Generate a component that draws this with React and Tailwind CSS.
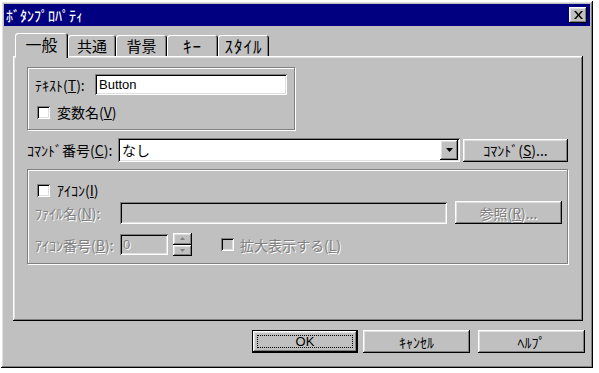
import React from 'react';

const raised = 'shadow-[inset_-1px_-1px_0_#000,inset_1px_1px_0_#fff,inset_-2px_-2px_0_#808080,inset_2px_2px_0_#dfdfdf]';
const sunken = 'shadow-[inset_1px_1px_0_#808080,inset_-1px_-1px_0_#fff,inset_2px_2px_0_#000,inset_-2px_-2px_0_#dfdfdf]';
const dis = 'text-[#808080] [text-shadow:1px_1px_0_#fff]';

function Checkbox({ disabled }) {
  return (
    <div className={`w-[13px] h-[13px] shrink-0 ${sunken} ${disabled ? 'bg-[#c0c0c0]' : 'bg-white'}`} />
  );
}

function Button({ children, className = '', disabled, isDefault }) {
  if (isDefault) {
    return (
      <div className={`border border-black flex ${className}`}>
        <div className={`flex-1 flex items-center justify-center ${raised} p-[4px]`}>
          <div className="w-full h-full border border-dotted border-black flex items-center justify-center">
            {children}
          </div>
        </div>
      </div>
    );
  }
  return (
    <div className={`flex items-center justify-center ${raised} ${disabled ? dis : ''} ${className}`}>
      {children}
    </div>
  );
}

function Tab({ label, active, className = '' }) {
  return (
    <div
      className={`flex items-center justify-center rounded-t-[3px] shadow-[inset_1px_1px_0_#fff,inset_-1px_0_0_#000,inset_-2px_0_0_#808080] bg-[#c0c0c0] ${
        active ? 'relative z-10 h-[25px] -mb-[2px] text-[16px] pb-[3px]' : 'h-[21px] text-[15px]'
      } ${className}`}
    >
      {label}
    </div>
  );
}

export default function App() {
  return (
    <div className="w-[599px] h-[373px] bg-white pt-[1px] pl-[1px] [font-family:'Noto_Sans_CJK_JP','Noto_Sans',sans-serif] text-[14px] leading-none text-black">
      <div className={`w-[592px] h-[367px] bg-[#c0c0c0] ${raised} p-[3px] flex flex-col`}>
        {/* Title bar */}
        <div className="h-[22px] bg-[#000080] flex items-center justify-between pl-[2px] pr-[2px]">
          <span className="text-white text-[14px] font-medium">ﾎﾞﾀﾝﾌﾟﾛﾊﾟﾃｨ</span>
          <div className={`w-[18px] h-[16px] ${raised} bg-[#c0c0c0] flex items-center justify-center mr-[1px]`}>
            <svg width="9" height="8" viewBox="0 0 9 8">
              <path d="M0 0h2l2.5 3 2.5-3h2L5.5 4 9 8H7L4.5 5 2 8H0l3.5-4z" fill="#000" />
            </svg>
          </div>
        </div>

        {/* Tabs */}
        <div className="mt-[7px] ml-[11px] h-[23px] flex items-end">
          <Tab label="一般" active className="w-[53px]" />
          <Tab label="共通" className="w-[48px]" />
          <Tab label="背景" className="w-[51px]" />
          <Tab label={<span className="text-[17px] tracking-[1px]">ｷｰ</span>} className="w-[51px]" />
          <Tab label={<span className="text-[17px] tracking-[1px]">ｽﾀｲﾙ</span>} className="w-[51px]" />
        </div>

        {/* Panel */}
        <div className={`ml-[9px] w-[570px] h-[265px] ${raised} pl-[14px] pt-[11px] flex flex-col`}>
          {/* Group 1 */}
          <div className="w-[268px] h-[63px] border border-[#808080] shadow-[inset_1px_1px_0_#fff,1px_1px_0_#fff] pl-[7px] pt-[6px] flex flex-col">
            <div className="flex items-center">
              <span className="w-[60px]">ﾃｷｽﾄ(<u>T</u>):</span>
              <div className={`w-[192px] h-[21px] bg-white ${sunken} flex items-center pl-[4px] text-[13px] [font-family:'Liberation_Sans',sans-serif]`}>
                Button
              </div>
            </div>
            <div className="flex items-center mt-[10px] pl-[2px]">
              <Checkbox />
              <span className="ml-[7px]">変数名(<u>V</u>)</span>
            </div>
          </div>

          {/* Command row */}
          <div className="flex items-center mt-[8px]">
            <span className="w-[91px]">ｺﾏﾝﾄﾞ番号(<u>C</u>):</span>
            <div className={`w-[342px] h-[24px] bg-white ${sunken} flex items-center justify-between pl-[4px] pr-[2px]`}>
              <span>なし</span>
              <div className={`w-[18px] h-[20px] bg-[#c0c0c0] ${raised} flex items-center justify-center`}>
                <svg width="7" height="4" viewBox="0 0 7 4">
                  <path d="M0 0h7L3.5 4z" fill="#000" />
                </svg>
              </div>
            </div>
            <Button className="ml-[3px] w-[105px] h-[23px]">ｺﾏﾝﾄﾞ(<u>S</u>)...</Button>
          </div>

          {/* Group 2 */}
          <div className="mt-[7px] w-[541px] h-[95px] border border-[#808080] shadow-[inset_1px_1px_0_#fff,1px_1px_0_#fff] pl-[7px] pt-[13px] flex flex-col">
            <div className="flex items-center pl-[2px]">
              <Checkbox />
              <span className="ml-[7px]">ｱｲｺﾝ(<u>I</u>)</span>
            </div>
            <div className="flex items-center mt-[4px]">
              <span className={`w-[85px] ${dis}`}>ﾌｧｲﾙ名(<u>N</u>):</span>
              <div className={`w-[327px] h-[22px] bg-[#c0c0c0] ${sunken}`} />
              <Button disabled className="ml-[8px] w-[107px] h-[23px]">参照(<u>R</u>)...</Button>
            </div>
            <div className="flex items-center mt-[9px]">
              <span className={`w-[85px] ${dis}`}>ｱｲｺﾝ番号(<u>B</u>):</span>
              <div className={`w-[48px] h-[21px] bg-[#c0c0c0] ${sunken} flex items-center pl-[3px] ${dis} text-[13px] [font-family:'Liberation_Sans',sans-serif]`}>
                0
              </div>
              <div className="ml-[5px] w-[19px] h-[23px] flex flex-col">
                <div className={`flex-1 ${raised} flex items-center justify-center`}>
                  <svg width="5" height="3" viewBox="0 0 5 3"><path d="M2.5 0L5 3H0z" fill="#808080" /></svg>
                </div>
                <div className={`flex-1 ${raised} flex items-center justify-center`}>
                  <svg width="5" height="3" viewBox="0 0 5 3"><path d="M0 0h5L2.5 3z" fill="#808080" /></svg>
                </div>
              </div>
              <div className="ml-[29px] flex items-center">
                <Checkbox disabled />
                <span className={`ml-[6px] ${dis}`}>拡大表示する(<u>L</u>)</span>
              </div>
            </div>
          </div>
        </div>

        {/* Bottom buttons */}
        <div className="mt-[9px] flex justify-end pr-[5px]">
          <Button isDefault className="w-[106px] h-[23px]">
            <span className="[font-family:'Liberation_Sans',sans-serif] text-[13px]">OK</span>
          </Button>
          <Button className="ml-[5px] w-[107px] h-[23px]">ｷｬﾝｾﾙ</Button>
          <Button className="ml-[8px] w-[107px] h-[23px]">ﾍﾙﾌﾟ</Button>
        </div>
      </div>
    </div>
  );
}
